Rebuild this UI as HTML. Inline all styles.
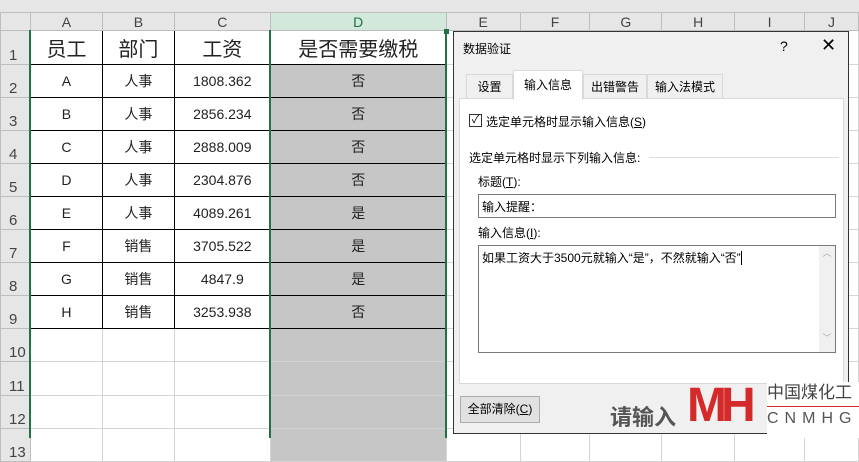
<!DOCTYPE html>
<html><head><meta charset="utf-8"><style>
*{margin:0;padding:0;box-sizing:border-box}
body{width:859px;height:438px;overflow:hidden;background:#fff;position:relative;font-family:"Liberation Sans","Noto Sans CJK SC",sans-serif}
#top{position:absolute;left:0;top:0;width:859px;height:12px;background:#e6e6e6}
table{position:absolute;left:0;top:12px;border-collapse:collapse;table-layout:fixed}
td{border:1px solid #d4d4d4;text-align:center;font-size:14px;color:#222;padding:0;overflow:hidden;white-space:nowrap}
tr.h td{background:#e6e6e6;color:#444;font-size:14px;height:18px;border-color:#bdbdbd}
td.rh{background:#e6e6e6;color:#444;font-size:15px;text-align:left;padding-left:8px;vertical-align:bottom;border-color:#bdbdbd}
td.b{border:1px solid #000}
td.g{background:#c6c6c6}
td.dh{background:#d2e8da !important;color:#217346 !important}
.dlg{position:absolute;left:453px;top:31px;width:396px;height:403px;background:#f0f0f0;border:1px solid #333;font-size:12px;color:#000}
.abs{position:absolute;white-space:nowrap}
</style></head><body>
<div id="top"></div>
<table>
<colgroup><col style="width:30px"><col style="width:72px"><col style="width:72px"><col style="width:96px"><col style="width:176px"><col style="width:74px"><col style="width:70px"><col style="width:72px"><col style="width:73px"><col style="width:70px"><col style="width:54px"></colgroup>
<tr class="h"><td></td><td>A</td><td>B</td><td>C</td><td class="dh">D</td><td>E</td><td>F</td><td>G</td><td>H</td><td>I</td><td>J</td></tr>
<tr style="height:34px"><td class="rh">1</td><td class="b" style="font-size:20px">员工</td><td class="b" style="font-size:20px">部门</td><td class="b" style="font-size:20px">工资</td><td class="b" style="font-size:20px">是否需要缴税</td><td></td><td></td><td></td><td></td><td></td><td></td></tr>
<tr style="height:33px"><td class="rh">2</td><td class="b">A</td><td class="b">人事</td><td class="b">1808.362</td><td class="b g">否</td><td></td><td></td><td></td><td></td><td></td><td></td></tr>
<tr style="height:33px"><td class="rh">3</td><td class="b">B</td><td class="b">人事</td><td class="b">2856.234</td><td class="b g">否</td><td></td><td></td><td></td><td></td><td></td><td></td></tr>
<tr style="height:33px"><td class="rh">4</td><td class="b">C</td><td class="b">人事</td><td class="b">2888.009</td><td class="b g">否</td><td></td><td></td><td></td><td></td><td></td><td></td></tr>
<tr style="height:33px"><td class="rh">5</td><td class="b">D</td><td class="b">人事</td><td class="b">2304.876</td><td class="b g">否</td><td></td><td></td><td></td><td></td><td></td><td></td></tr>
<tr style="height:33px"><td class="rh">6</td><td class="b">E</td><td class="b">人事</td><td class="b">4089.261</td><td class="b g">是</td><td></td><td></td><td></td><td></td><td></td><td></td></tr>
<tr style="height:33px"><td class="rh">7</td><td class="b">F</td><td class="b">销售</td><td class="b">3705.522</td><td class="b g">是</td><td></td><td></td><td></td><td></td><td></td><td></td></tr>
<tr style="height:33px"><td class="rh">8</td><td class="b">G</td><td class="b">销售</td><td class="b">4847.9</td><td class="b g">是</td><td></td><td></td><td></td><td></td><td></td><td></td></tr>
<tr style="height:33px"><td class="rh">9</td><td class="b">H</td><td class="b">销售</td><td class="b">3253.938</td><td class="b g">否</td><td></td><td></td><td></td><td></td><td></td><td></td></tr>
<tr style="height:33px"><td class="rh">10</td><td></td><td></td><td></td><td class="g"></td><td></td><td></td><td></td><td></td><td></td><td></td></tr>
<tr style="height:34px"><td class="rh">11</td><td></td><td></td><td></td><td class="g"></td><td></td><td></td><td></td><td></td><td></td><td></td></tr>
<tr style="height:33px"><td class="rh">12</td><td></td><td></td><td></td><td class="g"></td><td></td><td></td><td></td><td></td><td></td><td></td></tr>
<tr style="height:33px"><td class="rh">13</td><td></td><td></td><td></td><td class="g"></td><td></td><td></td><td></td><td></td><td></td><td></td></tr>
</table>
<div class="abs" style="left:29px;top:30px;width:2px;height:408px;background:#217346"></div>
<div class="abs" style="left:269px;top:30px;width:2px;height:408px;background:#217346"></div>
<div class="abs" style="left:445px;top:30px;width:2px;height:408px;background:#217346"></div>
<div class="abs" style="left:444px;top:29px;width:5px;height:5px;background:#217346"></div>

<div class="dlg">
 <div class="abs" style="left:9px;top:8px">数据验证</div>
 <div class="abs" style="left:326px;top:6px;font-size:14px">?</div>
 <div class="abs" style="left:367px;top:3px;font-size:18px">✕</div>
 <div class="abs" style="left:5px;top:66px;width:385px;height:286px;background:#fff;border:1px solid #d9d9d9"></div>
 <div class="abs" style="left:12px;top:42px;width:47px;height:24px;border:1px solid #d9d9d9;border-bottom:none;text-align:center;line-height:24px">设置</div>
 <div class="abs" style="left:59px;top:38px;width:70px;height:30px;background:#fff;border:1px solid #d9d9d9;border-bottom:none;text-align:center;line-height:28px">输入信息</div>
 <div class="abs" style="left:129px;top:42px;width:64px;height:24px;border:1px solid #d9d9d9;border-bottom:none;text-align:center;line-height:24px">出错警告</div>
 <div class="abs" style="left:193px;top:42px;width:76px;height:24px;border:1px solid #d9d9d9;border-bottom:none;text-align:center;line-height:24px">输入法模式</div>
 <div class="abs" style="left:15px;top:82px;width:13px;height:13px;border:1px solid #333;background:#fff;font-size:11px;line-height:11px;text-align:center">✓</div>
 <div class="abs" style="left:32px;top:81px">选定单元格时显示输入信息(<u>S</u>)</div>
 <div class="abs" style="left:15px;top:117px">选定单元格时显示下列输入信息:</div>
 <div class="abs" style="left:195px;top:125px;width:190px;height:1px;background:#dcdcdc"></div>
 <div class="abs" style="left:24px;top:141px">标题(<u>T</u>):</div>
 <div class="abs" style="left:24px;top:162px;width:358px;height:24px;border:1px solid #7a7a7a;background:#fff;padding:3px 3px">输入提醒：</div>
 <div class="abs" style="left:24px;top:192px">输入信息(<u>I</u>):</div>
 <div class="abs" style="left:24px;top:213px;width:358px;height:108px;border:1px solid #7a7a7a;background:#fff;padding:3px 3px">如果工资大于3500元就输入“是”，不然就输入“否”<span style="border-left:1px solid #000"> </span></div>
 <div class="abs" style="left:365px;top:214px;width:16px;height:106px;background:#f0f0f0;color:#aaa;font-size:9px;text-align:center">︿<div style="margin-top:72px">﹀</div></div>
 <div class="abs" style="left:6px;top:364px;width:80px;height:27px;border:1px solid #adadad;background:#e1e1e1;text-align:center;line-height:25px">全部清除(<u>C</u>)</div>
 <div class="abs" style="left:156px;top:368px;font-size:22px;font-weight:bold;color:#555">请输入</div>
 <div class="abs" style="left:233px;top:348px;width:80px;height:52px;font-size:48px;font-weight:bold;color:#d42a2a;line-height:52px;letter-spacing:-6px">MH</div>
</div>
<div class="abs" style="left:767px;top:382px;width:92px;height:56px;background:#fff"></div>
<div class="abs" style="left:767px;top:382px;font-size:17px;color:#444;line-height:22px">中国煤化工</div>
<div class="abs" style="left:767px;top:406px;width:92px;height:1px;background:#d42a2a"></div>
<div class="abs" style="left:767px;top:409px;font-size:16px;color:#555;letter-spacing:6px;line-height:20px">CNMHG</div>
</body></html>
